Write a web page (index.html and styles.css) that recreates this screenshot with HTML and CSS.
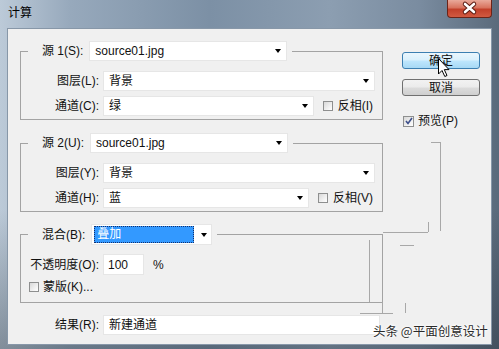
FILE: index.html
```html
<!DOCTYPE html>
<html lang="zh">
<head>
<meta charset="UTF-8">
<title>计算</title>
<link rel="stylesheet" href="styles.css">
</head>
<body>

<div class="window">
  <div class="titlebar">
    <span class="title">计算</span>
    <div class="close">
      <svg width="45" height="18" viewBox="0 0 45 18">
        <path d="M18 5 L27 13 M27 5 L18 13" stroke="#5a1a10" stroke-width="4.5" stroke-linecap="round"/>
        <path d="M18 5 L27 13 M27 5 L18 13" stroke="#fff" stroke-width="2.6" stroke-linecap="round"/>
      </svg>
    </div>
  </div>

  <div class="client">
    <div class="main">

      <!-- 源 1 -->
      <fieldset class="group">
        <legend><div class="legend-row">
          <span class="lbl">源 1(S):</span>
          <div class="select src"><span>source01.jpg</span><i class="arrow"></i></div>
        </div></legend>
        <div class="row first">
          <span class="lbl col">图层(L):</span>
          <div class="select grow"><span>背景</span><i class="arrow"></i></div>
        </div>
        <div class="row">
          <span class="lbl col">通道(C):</span>
          <div class="select grow"><span>绿</span><i class="arrow"></i></div>
          <span class="check"><i class="box"></i>反相(I)</span>
        </div>
      </fieldset>

      <!-- 源 2 -->
      <fieldset class="group g2">
        <legend><div class="legend-row">
          <span class="lbl">源 2(U):</span>
          <div class="select src"><span>source01.jpg</span><i class="arrow"></i></div>
        </div></legend>
        <div class="row first">
          <span class="lbl col">图层(Y):</span>
          <div class="select grow"><span>背景</span><i class="arrow"></i></div>
        </div>
        <div class="row">
          <span class="lbl col">通道(H):</span>
          <div class="select grow"><span>蓝</span><i class="arrow"></i></div>
          <span class="check"><i class="box"></i>反相(V)</span>
        </div>
      </fieldset>

      <!-- 混合 -->
      <fieldset class="group g3">
        <legend><div class="legend-row">
          <span class="lbl">混合(B):</span>
          <div class="select blend"><span class="picked">叠加</span><i class="arrow"></i></div>
        </div></legend>
        <div class="row opacity">
          <span class="lbl col">不透明度(O):</span>
          <div class="input num">100</div>
          <span class="pct">%</span>
        </div>
        <div class="row mask">
          <span class="check"><i class="box"></i>蒙版(K)...</span>
        </div>
      </fieldset>

      <div class="row result">
        <span class="lbl col">结果(R):</span>
        <div class="select grow"><span>新建通道</span></div>
      </div>

    </div>

    <div class="side">
      <div class="btn default">确定</div>
      <div class="btn">取消</div>
      <span class="check preview"><i class="box on">
        <svg width="8" height="8" viewBox="0 0 8 8"><path d="M1 4 L3 6.5 L7 1" stroke="#3d4f8a" stroke-width="1.6" fill="none"/></svg>
      </i>预览(P)</span>
    </div>
  </div>
</div>

<!-- 截图里残留的线条 -->
<div class="ghost" style="left:440px;top:142px;width:1px;height:89px"></div>
<div class="ghost" style="left:431px;top:142px;width:9px;height:1px"></div>
<div class="ghost" style="left:383px;top:232px;width:45px;height:1px"></div>
<div class="ghost" style="left:428px;top:222px;width:1px;height:10px"></div>
<div class="ghost" style="left:369px;top:240px;width:1px;height:62px"></div>
<div class="ghost" style="left:382px;top:302px;width:1px;height:11px"></div>
<div class="ghost" style="left:360px;top:313px;width:33px;height:1px"></div>
<div class="ghost" style="left:405px;top:303px;width:1px;height:10px"></div>
<div class="ghost" style="left:400px;top:245px;width:14px;height:1px"></div>

<svg class="cursor" width="13" height="20" viewBox="0 0 13 20">
  <path d="M0.5 0.5 L0.5 16 L4 12.5 L6.8 18.5 L9 17.5 L6.3 11.6 L11 11.6 Z" fill="#fff" stroke="#000" stroke-width="1"/>
</svg>

<div class="watermark">头条 @平面创意设计</div>

</body>
</html>
```

FILE: styles.css
```css
html, body {
  margin: 0;
  padding: 0;
  height: 100%;
  overflow: hidden;
}

body {
  font-family: "Liberation Sans", "Noto Sans CJK SC", sans-serif;
  font-size: 12px;
  line-height: 14px;
  color: #111;
}

/* Ikkunan kehys */
.window {
  width: 499px;
  height: 349px;
  box-sizing: border-box;
  padding: 0 7px 4px 7px;
  display: flex;
  flex-direction: column;
  background:
    linear-gradient(180deg, rgba(0,0,0,0) 0%, rgba(0,0,0,0) 60%, rgba(20,30,40,0.35) 100%),
    linear-gradient(90deg, #bccad8 0%, #97a9bc 14%, #7c90a5 42%, #8c9eb1 66%, #7a8ca0 84%, #5a6a7b 100%);
}

.titlebar {
  height: 28px;
  display: flex;
  align-items: flex-start;
}

.title {
  margin-top: 5px;
  margin-left: 1px;
  font-family: "Noto Sans CJK SC", sans-serif;
  font-size: 12px;
  color: #000;
}

.close {
  margin-left: auto;
  width: 45px;
  height: 18px;
  box-sizing: border-box;
  border: 1px solid #6b2418;
  border-top: none;
  border-radius: 0 0 4px 4px;
  background: linear-gradient(180deg, #e9a99a 0%, #d8735e 45%, #c2402a 55%, #d25a41 100%);
}

.close svg {
  display: block;
  margin: -1px 0 0 -1px;
}

.client {
  flex: 1;
  display: flex;
  background: #f0f0f0;
  border: 1px solid #8797a8;
}

.main {
  width: 375px;
  box-sizing: border-box;
  padding: 12px 0 0 12px;
}

/* Ryhmälaatikot */
.group {
  width: 363px;
  box-sizing: border-box;
  margin: 0;
  padding: 0 7px 3px 7px;
  border: 1px solid #a3a3a3;
  min-width: 0;
}

.g2 {
  margin-top: 13px;
}

.g3 {
  margin-top: 12px;
  padding-bottom: 7px;
}

.group legend {
  padding: 0 5px 0 14px;
}

.legend-row {
  display: flex;
  align-items: center;
  gap: 6px;
}

.row {
  display: flex;
  align-items: center;
  margin-top: 5px;
}

.row.first {
  margin-top: 10px;
}

.lbl {
  white-space: nowrap;
}

.lbl.col {
  width: 71px;
  flex: none;
  text-align: right;
  margin-right: 4px;
}

.select,
.input {
  height: 20px;
  box-sizing: border-box;
  background: #fff;
  border: 1px solid #e6e6e6;
  display: flex;
  align-items: center;
  padding-left: 5px;
  white-space: nowrap;
}

.select.src {
  width: 198px;
}

.select.grow {
  flex: 1;
}

.arrow {
  margin-left: auto;
  margin-right: 5px;
  width: 0;
  height: 0;
  border-left: 3.5px solid transparent;
  border-right: 3.5px solid transparent;
  border-top: 4px solid #000;
}

.select.blend {
  width: 121px;
  height: 21px;
  padding-left: 2px;
}

.picked {
  width: 100px;
  height: 17px;
  box-sizing: border-box;
  background: #3399ff;
  border: 1px dotted #15306b;
  color: #fff;
  padding-left: 2px;
  line-height: 15px;
}

.blend .arrow {
  margin-right: 4px;
}

/* Valintaruudut */
.check {
  display: flex;
  align-items: center;
  gap: 5px;
  margin-left: 9px;
  margin-right: 2px;
  white-space: nowrap;
}

.box {
  width: 10px;
  height: 10px;
  box-sizing: border-box;
  border: 1px solid #8e8f8f;
  background: linear-gradient(135deg, #d8d8d8 0%, #f4f4f4 70%, #fff 100%);
  display: flex;
  align-items: center;
  justify-content: center;
}

.box.on {
  width: 11px;
  height: 11px;
}

.box svg {
  display: block;
}

.opacity {
  margin-top: 9px;
}

.input.num {
  width: 41px;
  height: 21px;
  padding-left: 4px;
}

.pct {
  margin-left: 9px;
}

.mask {
  height: 16px;
  margin-top: 4px;
}

.mask .check {
  margin-left: 1px;
  gap: 4px;
}

.result {
  margin-top: 12px;
  padding-left: 8px;
  width: 352px;
}

/* Painikkeet oikealla */
.side {
  padding: 23px 0 0 19px;
  display: flex;
  flex-direction: column;
}

.btn {
  width: 78px;
  height: 17px;
  box-sizing: border-box;
  border: 1px solid #707070;
  border-radius: 3px;
  background: linear-gradient(180deg, #f2f2f2 0%, #ebebeb 48%, #dcdcdc 52%, #cfcfcf 100%);
  display: flex;
  align-items: center;
  justify-content: center;
  margin-bottom: 10px;
}

.btn.default {
  border-color: #3c7fb1;
  background: linear-gradient(180deg, #eaf6fd 0%, #d9f0fc 48%, #bee6fd 52%, #a7d9f5 100%);
}

.check.preview {
  margin: 8px 0 0 1px;
  gap: 4px;
}

/* Päälle piirretyt asiat */
.ghost {
  position: absolute;
  background: #a8a8a8;
}

.cursor {
  position: absolute;
  left: 438px;
  top: 58px;
}

.watermark {
  position: absolute;
  left: 373px;
  top: 323px;
  font-family: "Noto Sans CJK SC", sans-serif;
  font-size: 12.5px;
  line-height: 16px;
  color: #2a2a2a;
  white-space: nowrap;
  text-shadow: 0 0 2px #fff, 0 0 3px #fff, 0 0 4px #fff;
}
```
